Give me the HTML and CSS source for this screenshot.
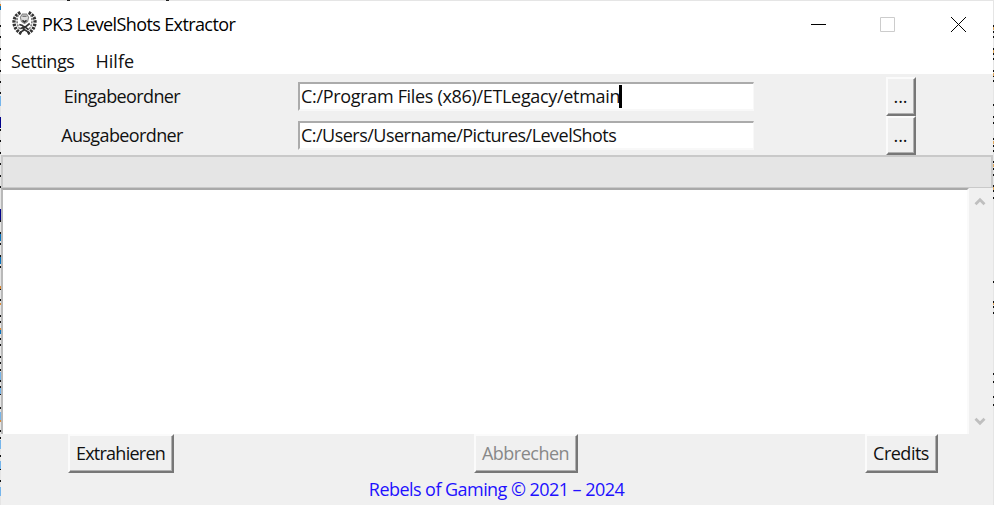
FILE: index.html
```html
<!DOCTYPE html>
<html lang="de">
<head>
<meta charset="utf-8">
<title>PK3 LevelShots Extractor</title>
<link rel="stylesheet" href="styles.css">
</head>
<body>
<main class="window">
  <header class="titlebar">
    <svg class="logo" viewBox="0 0 24 24" fill="none" stroke="#333">
      <path d="M8 1.5C3 4 1.500 8 2 12s3 8 8 10M16 1.500C21 4 22.500 8 22 12s-3 8-8 10" stroke-width="3.200" stroke-dasharray="2.300 1"/>
      <path d="M6 4C4 8 4.500 14 8 18M18 4c2 4 1.500 10-2 14" stroke="#777" stroke-width="1.500" stroke-dasharray="2 1"/>
      <path d="M8 6 10 3h4l2 3-1 4-3 2-3-2z" fill="#ddd" stroke="#888"/>
      <path d="m10 9 2 1.500L14 9M7 13l3 1 2 2 5-4M8 17l4-2 4 3M7 21l5-3 5 3M11 15v3" stroke-width="1.600"/>
      <path d="M10 5h4" stroke="#555"/>
    </svg>
    <h1 class="title"><span class="t-title">PK3 LevelShots Extractor</span></h1>
    <svg class="controls" viewBox="0 0 160 20" fill="none">
      <path d="M4 10.5h15" stroke="#000"/>
      <path d="M73.5 3.5h14v14h-14z" stroke="#ccc"/>
      <path d="m144 3 15 15M159 3l-15 15" stroke="#000"/>
    </svg>
  </header>
  <nav class="menu"><span class="t-settings">Settings</span><span class="t-hilfe">Hilfe</span></nav>
  <section class="form">
    <label><span class="t-in">Eingabeordner</span></label>
    <div class="entry"><span class="t-path1">C:/Program Files (x86)/ETLegacy/etmain</span><i class="caret"></i></div>
    <button class="btn browse">...</button>
    <label><span class="t-out">Ausgabeordner</span></label>
    <div class="entry"><span class="t-path2">C:/Users/Username/Pictures/LevelShots</span></div>
    <button class="btn browse">...</button>
  </section>
  <div class="progress"></div>
  <section class="output">
    <div class="list"></div>
    <div class="scroll">
      <svg viewBox="0 0 12 9"><path d="m1.5 7.2 4.5-4.5 4.5 4.5"/></svg>
      <svg viewBox="0 0 12 9"><path d="M1.5 1.8 6 6.3l4.5-4.5"/></svg>
    </div>
  </section>
  <section class="actions">
    <button class="btn extract"><span class="t-ext">Extrahieren</span></button>
    <button class="btn cancel" disabled><span class="t-cancel">Abbrechen</span></button>
    <button class="btn credits"><span class="t-cred">Credits</span></button>
  </section>
  <footer><span class="t-foot">Rebels of Gaming © 2021 – 2024</span></footer>
</main>
<svg class="edge left" viewBox="0 0 1 505">
  <path d="M.5 0v505" stroke="#e5e5e5"/>
  <path d="M.5 25v2m0 9v2m0 10v2m0 9v2m0 9v2m0 9v2m0 9v2m0 24v2m0 9v2m0 9v2m0 10v2m0 9v2m0 10v2m0 9v2M.5 220v2m0 10v2m0 9v2m0 10v2m0 9v2m0 20v2m0 9v2m0 14v2m0 4v2m0 9v2m0 4v2m0 4v2m0 10v2m0 4v2m0 5v2m0 9v2m0 4v2m0 5v2m0 12v2m0 9v2m0 10v2m0 5v2m0 4v2m0 10v2m0 5v2m0 4v2m0 10v2m0 5v2" stroke="#111"/>
  <path d="M.5 96v10M.5 372v8m0 8v6m0 18v8m0 20v9m0 12v8m0 18v9" stroke="#75b5eb"/>
  <path d="M.5 117v11M.5 209v11" stroke="#00008b"/>
  <path d="M.5 234v7m0 16v7M.5 6v4m0 318v6" stroke="#0872bd"/>
  <path d="M.5 4v2M.5 286v3m0 14v2m0 23v2m0 90v2" stroke="#d98935"/>
</svg>
<svg class="edge right" viewBox="0 0 1 505">
  <path d="M.5 0v505" stroke="#e5e5e5"/>
  <path d="M.5 25v2m0 4v2m0 3v2m0 10v2m0 3v2m0 3v2m0 10v2m0 3v2m0 3v2m0 22v2m0 10v2m0 4v2m0 14v2m0 5v2m0 3v2m0 9v2m0 5v2m0 4v2m0 9v2m0 3v2m0 5v2M.5 281v2m0 18v2m0 3v2m0 4v2M.5 373v2m0 6v2m0 13v2m0 6v2" stroke="#111"/>
  <path d="M.5 27v3m0 20v3m0 20v3m0 65v3m0 20v3m0 20v3m0 113v2" stroke="#e0a85d"/>
</svg>
<svg class="edge top" viewBox="0 0 994 1">
  <path d="M0 .5h994" stroke="#e5e5e5"/>
  <path d="M67 .5h3M166 .5h3" stroke="#222"/>
</svg>
</body>
</html>
```
FILE: styles.css
```css
* { box-sizing: border-box; }
body { margin: 0; width: 994px; height: 505px; overflow: hidden; background: #f0f0f0; font: 18px/24px "Open Sans", "Noto Sans", sans-serif; color: #111; }
span { white-space: nowrap; }
.window { height: 505px; padding: 1px 1px 0; display: flex; flex-direction: column; }
.titlebar { height: 47px; background: #fff; display: flex; align-items: center; padding: 0 26px 0 11px; }
.logo { width: 25px; height: 25px; margin-right: 5px; margin-top: -3px; }
.title { margin: -2px 0 0; font: inherit; color: #000; }
.controls { width: 160px; height: 20px; margin-left: auto; margin-top: -2px; }
.menu { height: 26px; background: #fff; display: flex; gap: 21px; padding: 1px 10px; }
.form { height: 81px; display: grid; grid-template-columns: 242px 511px 1fr; grid-template-rows: 39px 39px; padding-top: 3px; align-items: center; }
label { text-align: center; margin-top: -2px; }
.entry { display: flex; align-items: center; width: 456px; height: 29px; margin-left: 55px; margin-top: -1px; background: #fff; border: solid #f8f8f8; border-width: 2px; border-top-color: #ababab; border-left-color: #ababab; border-right-width: 1px; padding-left: 1px; }
.caret { width: 3px; height: 23px; background: #000; margin-left: -1px; }
.btn { height: 39px; padding: 0 1px 2px 0; display: flex; align-items: center; justify-content: center; background: #f0f0f0; color: #111; font: inherit; border-style: solid; border-width: 2px; border-color: #fbfbfb #777 #777 #fbfbfb; box-shadow: inset -1px -1px #b0b0b0; }
.browse { width: 30px; margin-left: 132px; }
.progress { height: 33px; background: #e5e5e5; border: 2px solid #c9c9c9; border-bottom-width: 1px; }
.output { height: 246px; display: flex; }
.list { flex: 1; background: #fff; border-top: 2px solid #a9a9a9; border-left: 2px solid #b9b9b9; border-right: 2px solid #fafafa; }
.scroll { width: 24px; display: flex; flex-direction: column; justify-content: space-between; align-items: center; padding: 9px 2px 8px 0; }
.scroll svg { width: 12px; height: 9px; fill: none; stroke: #bfbfbf; stroke-width: 2.8; }
.actions { height: 41px; display: flex; padding-left: 67px; }
.extract { width: 106px; }
.cancel { width: 104px; margin-left: 300px; color: #888; }
.credits { width: 73px; margin-left: 287px; }
footer { text-align: center; color: #2210ff; margin-top: 2px; padding-right: 1px; }
.t-title, .t-in, .t-out { letter-spacing: -.61px; }
.t-settings { letter-spacing: -.4px; }
.t-path1 { letter-spacing: -.32px; }
.t-path2 { letter-spacing: -.52px; }
.t-ext { letter-spacing: -.75px; }
.t-cancel, .t-cred { letter-spacing: -.5px; }
.t-foot { letter-spacing: -.55px; }
.edge { position: absolute; top: 0; width: 1px; height: 505px; }
.left { left: 0; }
.right { left: 993px; }
.top { left: 0; width: 994px; height: 1px; }
```
